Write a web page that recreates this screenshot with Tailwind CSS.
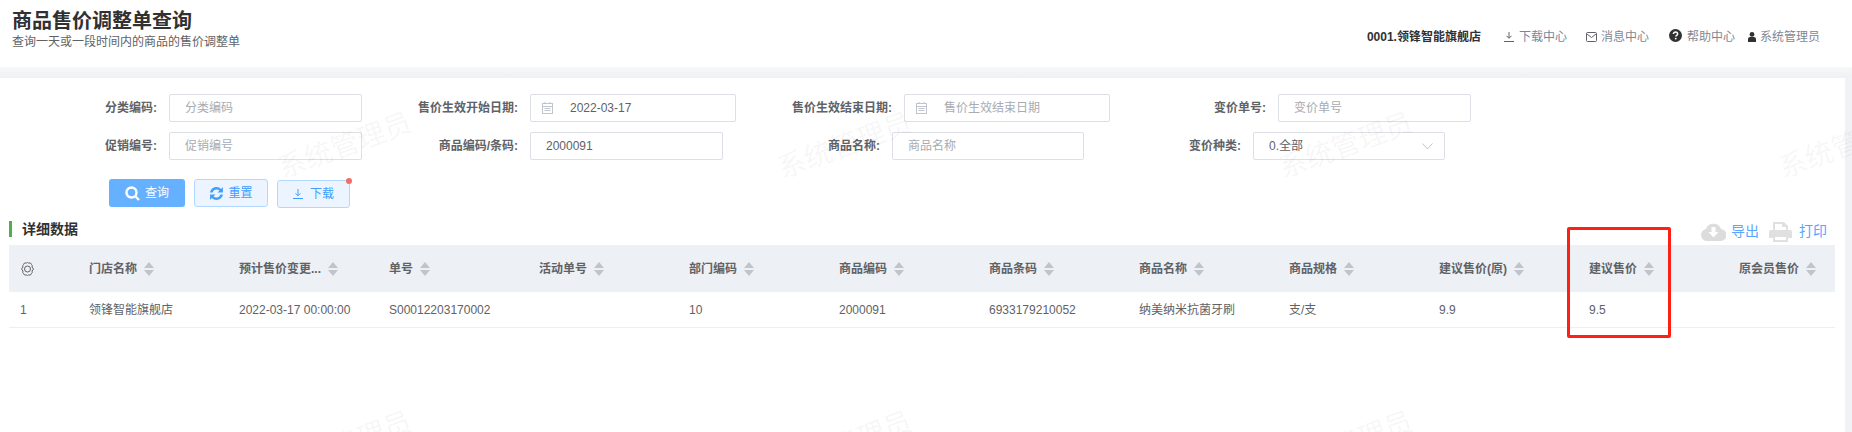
<!DOCTYPE html>
<html lang="en">
<head>
    <meta charset="UTF-8">
    <title>商品售价调整单查询</title>
    <script src="https://cdn.jsdelivr.net/npm/@tailwindcss/browser@4"></script>
</head>
<body class="relative h-[432px] w-[1852px] overflow-hidden bg-[#f0f2f5] text-[12px] text-[#606266] font-['Liberation_Sans','Noto_Sans_CJK_SC',sans-serif]">
    <!-- top bar -->
    <header class="flex h-[67px] justify-between bg-white pl-[12px] pr-[32px]">
        <div class="pt-[9px]">
            <h1 class="text-[20px] leading-[24px] font-bold text-[#303133]">商品售价调整单查询</h1>
            <p class="mt-[2px] text-[12px] leading-[14px] text-[#606266]">查询一天或一段时间内的商品的售价调整单</p>
        </div>
        <div class="flex h-[74px] items-center text-[#7f8893]">
            <span class="mr-[23px] font-bold text-[#303133]">0001.领锋智能旗舰店</span>
            <svg class="mr-[5px]" width="10" height="10" viewBox="0 0 10 10" fill="none" stroke="#606266"><path d="M5 0v6M2.5 3.8 5 6.3l2.5-2.5M0 9.5h10"/></svg>
            <span class="mr-[19px] text-[#6f8aa3]">下载中心</span>
            <svg class="mr-[4px]" width="11" height="10" viewBox="0 0 11 10" fill="none" stroke="#606266"><rect x=".5" y=".5" width="10" height="9" rx="1"/><path d="m1 2 4.5 3.5L10 2"/></svg>
            <span class="mr-[20px]">消息中心</span>
            <svg class="mr-[5px] mt-[-4px]" width="13" height="13" viewBox="0 0 13 13"><circle cx="6.5" cy="6.5" r="6.5" fill="#303133"/><path d="M4.4 5c0-1.3 1-1.9 2.1-1.9s2.1.6 2.1 1.8c0 1.5-1.7 1.4-1.7 2.6" fill="none" stroke="#fff" stroke-width="1.5"/><rect x="5.9" y="8.8" width="1.6" height="1.6" fill="#fff"/></svg>
            <span class="mr-[13px]">帮助中心</span>
            <svg class="mr-[4px]" width="8" height="10" viewBox="0 0 8 10" fill="#303133"><circle cx="4" cy="2.4" r="2.4"/><path d="M0 10V7.2C0 5.8 1 5 2.2 5h3.6C7 5 8 5.8 8 7.2V10z"/></svg>
            <span>系统管理员</span>
        </div>
    </header>
    <div class="h-[11px] bg-gradient-to-b from-[#f6f7f8] to-[#f0f1f4]"></div>

    <main class="h-[354px] w-[1845px] bg-white pt-[16px]">
        <!-- search form -->
        <div class="flex">
            <div class="flex w-[362px] items-center justify-end gap-[12px]">
                <label class="font-bold">分类编码:</label>
                <input class="h-[28px] w-[193px] rounded-[2px] border border-[#dcdfe6] px-[15px] text-[12px] outline-none placeholder:text-[#a8abb2]" placeholder="分类编码">
            </div>
            <div class="flex w-[374px] items-center justify-end gap-[12px]">
                <label class="font-bold">售价生效开始日期:</label>
                <div class="flex h-[28px] w-[206px] items-center rounded-[2px] border border-[#dcdfe6] pl-[11px]">
                    <svg width="11" height="12" viewBox="0 0 11 12" fill="none" stroke="#c0c4cc"><rect x=".5" y="1.5" width="10" height="10"/><path d="M0 4.5h11M3 0v2M8 0v2M2.5 6.5h6M2.5 8.5h6"/></svg>
                    <input class="ml-[17px] w-[140px] text-[12px] text-[#606266] outline-none" value="2022-03-17">
                </div>
            </div>
            <div class="flex w-[374px] items-center justify-end gap-[12px]">
                <label class="font-bold">售价生效结束日期:</label>
                <div class="flex h-[28px] w-[206px] items-center rounded-[2px] border border-[#dcdfe6] pl-[11px]">
                    <svg width="11" height="12" viewBox="0 0 11 12" fill="none" stroke="#c0c4cc"><rect x=".5" y="1.5" width="10" height="10"/><path d="M0 4.5h11M3 0v2M8 0v2M2.5 6.5h6M2.5 8.5h6"/></svg>
                    <input class="ml-[17px] w-[150px] text-[12px] outline-none placeholder:text-[#a8abb2]" placeholder="售价生效结束日期">
                </div>
            </div>
            <div class="flex w-[361px] items-center justify-end gap-[12px]">
                <label class="font-bold">变价单号:</label>
                <input class="h-[28px] w-[193px] rounded-[2px] border border-[#dcdfe6] px-[15px] text-[12px] outline-none placeholder:text-[#a8abb2]" placeholder="变价单号">
            </div>
        </div>
        <div class="mt-[10px] flex">
            <div class="flex w-[362px] items-center justify-end gap-[12px]">
                <label class="font-bold">促销编号:</label>
                <input class="h-[28px] w-[193px] rounded-[2px] border border-[#dcdfe6] px-[15px] text-[12px] outline-none placeholder:text-[#a8abb2]" placeholder="促销编号">
            </div>
            <div class="flex w-[361px] items-center justify-end gap-[12px]">
                <label class="font-bold">商品编码/条码:</label>
                <input class="h-[28px] w-[193px] rounded-[2px] border border-[#dcdfe6] px-[15px] text-[12px] text-[#606266] outline-none" value="2000091">
            </div>
            <div class="flex w-[361px] items-center justify-end gap-[12px]">
                <label class="font-bold">商品名称:</label>
                <input class="h-[28px] w-[192px] rounded-[2px] border border-[#dcdfe6] px-[15px] text-[12px] outline-none placeholder:text-[#a8abb2]" placeholder="商品名称">
            </div>
            <div class="flex w-[361px] items-center justify-end gap-[12px]">
                <label class="font-bold">变价种类:</label>
                <div class="flex h-[28px] w-[192px] items-center justify-between rounded-[2px] border border-[#dcdfe6] pl-[15px] pr-[11px]">
                    <span>0.全部</span>
                    <svg width="11" height="7" viewBox="0 0 11 7" fill="none" stroke="#c0c4cc"><path d="m.5.5 5 5.5 5-5.5"/></svg>
                </div>
            </div>
        </div>

        <!-- buttons -->
        <div class="ml-[109px] mt-[19px] flex items-start gap-[9px]">
            <button class="flex h-[28px] w-[76px] items-center justify-center gap-[5px] rounded-[3px] bg-[#66b1ff] text-white">
                <svg width="15" height="15" viewBox="0 0 15 15" fill="none" stroke="#fff"><circle cx="6.5" cy="6.5" r="5" stroke-width="2.4"/><path d="m10 10 4 4" stroke-width="2.4"/></svg>
                查询
            </button>
            <button class="flex h-[28px] w-[74px] items-center justify-center gap-[4px] rounded-[3px] border border-[#b3d8ff] bg-[#ecf5ff] text-[#409eff]">
                <svg width="15" height="15" viewBox="0 0 14 14" fill="#409eff"><path d="M1 6C1.5 3 4 1 7 1c1.7 0 3.2.7 4.3 1.8L13 1v5H8l1.8-1.8C9 3.500 8.100 3.200 7 3.200 5.300 3.200 3.900 4.300 3.400 6zM13 8c-.5 3-3 5-6 5-1.700 0-3.200-.7-4.300-1.800L1 13V8h5l-1.800 1.800c.8.700 1.700 1 2.800 1 1.700 0 3.100-1.100 3.600-2.800z"/></svg>
                重置
            </button>
            <button class="relative mt-[1px] flex h-[28px] w-[73px] items-center justify-center gap-[7px] rounded-[3px] border border-[#b3d8ff] bg-[#ecf5ff] text-[#409eff]">
                <svg width="10" height="10" viewBox="0 0 10 10" fill="none" stroke="#409eff"><path d="M5 0v6.500M2.500 4.300 5 6.800l2.500-2.500M0 9.500h10"/></svg>
                下载
                <span class="absolute right-[-3px] top-[-3px] h-[6px] w-[6px] rounded-full bg-[#f56c6c]"></span>
            </button>
        </div>

        <!-- section title and tools -->
        <div class="ml-[9px] mt-[13px] flex h-[24px] w-[1826px] items-start justify-between pr-[8px]">
            <h2 class="border-l-[3px] border-[#4caf50] pl-[10px] text-[14px] leading-[16px] font-bold text-[#303133]">详细数据</h2>
            <div class="flex items-center text-[14px] text-[#5aa5ff]">
                <svg class="mr-[5px]" width="25" height="18" viewBox="0 0 25 18"><path d="M6 18a6 6 0 0 1-1-11.900A8 8 0 0 1 20 6a6 6 0 0 1-1 12z" fill="#dcdcdc"/><path d="M10.500 4h4v5h3l-5 5.500L7.500 9h3z" fill="#fff"/></svg>
                <span class="mr-[10px]">导出</span>
                <svg class="mr-[7px]" width="23" height="20" viewBox="0 0 23 20" fill="#e0e0e0"><path d="M4 9V0h11l4 4v5h-2V5h-4V2H6v7z"/><path d="M2 8h19a2 2 0 0 1 2 2v6h-4v-3H4v3H0v-6a2 2 0 0 1 2-2z"/><path d="M4 13h15v7H4zM6 15v3h11v-3z" fill-rule="evenodd"/></svg>
                <span>打印</span>
            </div>
        </div>

        <!-- table -->
        <div class="ml-[9px] w-[1826px]">
            <div id="head" class="grid h-[47px] grid-cols-[65px_repeat(11,150px)_111px] items-center bg-[#edf0f5] font-bold">
                <div class="pl-[11px]">
                    <svg class="block" width="15" height="14" viewBox="0 0 15 14" fill="none" stroke="#606266"><path d="M4.500 1h2l1-.5 1 .5h2l1 1.500.8 1.200-.3 1.300 1.500 2-1.500 2 .3 1.300-.8 1.200-1 1.500h-2l-1 .5-1-.5h-2l-1-1.500-.8-1.200.3-1.300-1.500-2 1.500-2-.3-1.300.8-1.200z"/><circle cx="7.500" cy="7" r="3"/></svg>
                </div>
            </div>
            <div id="row" class="grid h-[36px] grid-cols-[65px_repeat(11,150px)_111px] items-center border-b border-[#ebeef5]">
                <div class="pl-[11px]">1</div>
            </div>
        </div>
    </main>

    <!-- red annotation box drawn over the screenshot -->
    <div class="pointer-events-none absolute left-[1567px] top-[227px] h-[111px] w-[104px] rounded-[2px] border-[3px] border-[#ff2015]"></div>

    <!-- watermark -->
    <div class="pointer-events-none absolute left-[275px] top-[129px] -rotate-20 whitespace-nowrap text-[28px] leading-[34px] text-black/5">系统管理员</div>
    <div class="pointer-events-none absolute left-[775px] top-[129px] -rotate-20 whitespace-nowrap text-[28px] leading-[34px] text-black/5">系统管理员</div>
    <div class="pointer-events-none absolute left-[1276px] top-[129px] -rotate-20 whitespace-nowrap text-[28px] leading-[34px] text-black/5">系统管理员</div>
    <div class="pointer-events-none absolute left-[1776px] top-[129px] -rotate-20 whitespace-nowrap text-[28px] leading-[34px] text-black/5">系统管理员</div>
    <div class="pointer-events-none absolute left-[275px] top-[428px] -rotate-20 whitespace-nowrap text-[28px] leading-[34px] text-black/5">系统管理员</div>
    <div class="pointer-events-none absolute left-[775px] top-[428px] -rotate-20 whitespace-nowrap text-[28px] leading-[34px] text-black/5">系统管理员</div>
    <div class="pointer-events-none absolute left-[1276px] top-[428px] -rotate-20 whitespace-nowrap text-[28px] leading-[34px] text-black/5">系统管理员</div>

    <script>
        const columns = ['门店名称', '预计售价变更...', '单号', '活动单号', '部门编码', '商品编码', '商品条码', '商品名称', '商品规格', '建议售价(原)', '建议售价', '原会员售价'];
        const values = ['领锋智能旗舰店', '2022-03-17 00:00:00', 'S00012203170002', '', '10', '2000091', '6933179210052', '纳美纳米抗菌牙刷', '支/支', '9.9', '9.5', ''];
        const sortIcon = '<svg class="ml-[7px] shrink-0" width="10" height="14" viewBox="0 0 10 14" fill="#c0c4cc"><path d="M5 0l5 6H0zM0 8h10l-5 6z"/></svg>';

        const head = document.getElementById('head');
        const row = document.getElementById('row');
        columns.forEach(function(name, i){
            head.insertAdjacentHTML('beforeend', `<div class="flex items-center pl-[15px]">${name}${sortIcon}</div>`);
            row.insertAdjacentHTML('beforeend', `<div class="pl-[15px]">${values[i]}</div>`);
        });
    </script>
</body>
</html>
